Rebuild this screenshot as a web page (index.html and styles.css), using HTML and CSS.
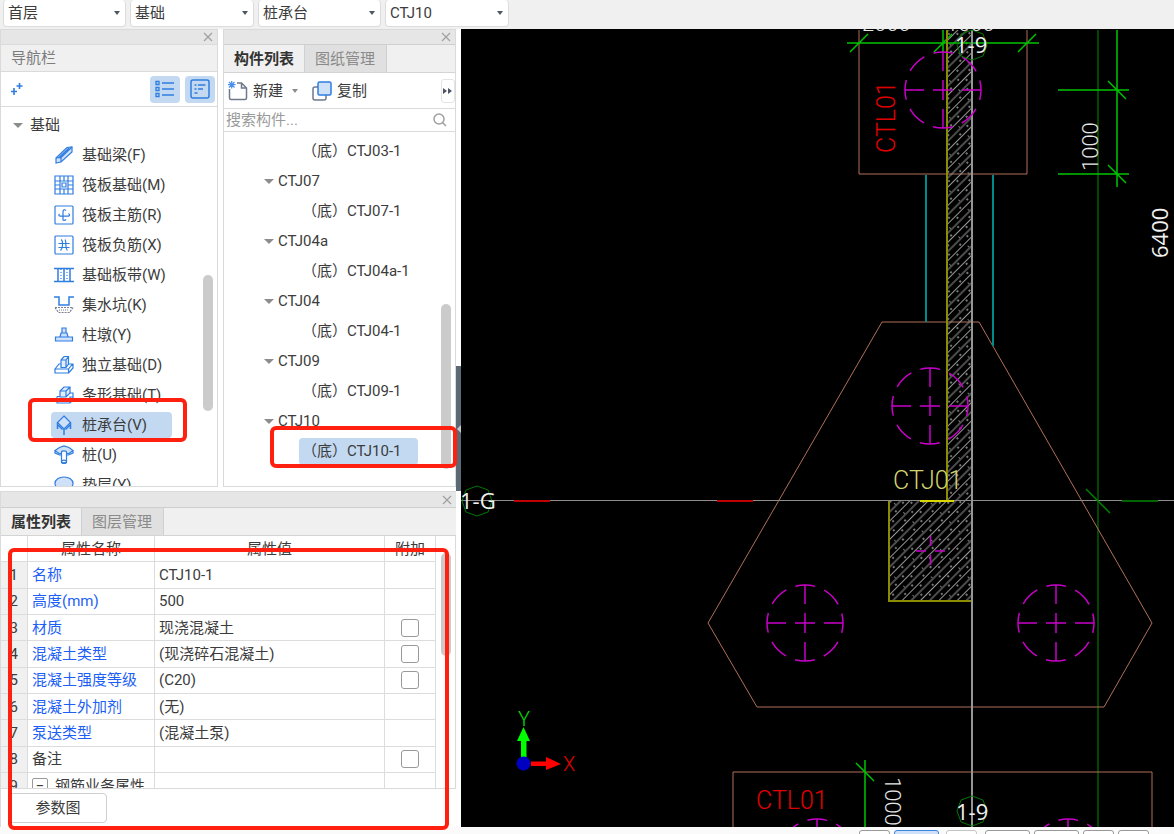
FILE: index.html
```html
<!DOCTYPE html>
<html lang="zh-CN">
<head>
<meta charset="utf-8">
<title>桩承台 CTJ10</title>
<link rel="stylesheet" href="styles.css">
</head>
<body>
<div class="app">
  <header class="topbar">
    <label class="picker"><select aria-label="楼层"><option>首层</option></select></label>
    <label class="picker"><select aria-label="构件大类"><option>基础</option></select></label>
    <label class="picker"><select aria-label="构件类型"><option>桩承台</option></select></label>
    <label class="picker"><select aria-label="构件名称"><option>CTJ10</option></select></label>
  </header>

  <main class="workspace">
    <div class="sidebar">
      <div class="upper">
        <section class="panel nav-panel">
          <div class="strip"><button class="close" aria-label="关闭导航栏"><svg width="10" height="10" viewBox="0 0 10 10"><path d="M1 1l8 8M9 1l-8 8"/></svg></button></div>
          <h2 class="panel-title">导航栏</h2>
          <div class="nav-tools">
            <button class="plain" aria-label="添加"><svg class="ico" width="14" height="16" viewBox="0 0 14 16"><path d="M4 7v7M1 10.500h6M9.500 2v6M6.500 5h6" stroke-width="1.600"/></svg></button>
            <span class="spacer"></span>
            <button class="toggle" aria-label="列表视图"><svg class="ico" width="22" height="20" viewBox="0 0 22 20"><path d="M8 4h12M8 10h12M8 16h12M2 2.500h3v3H2zM2 8.500h3v3H2zM2 14.500h3v3H2z" stroke-width="1.300"/></svg></button>
            <button class="toggle" aria-label="详情视图"><svg class="ico" width="20" height="20" viewBox="0 0 20 20"><rect x="1" y="1" width="18" height="18" rx="2" stroke-width="1.500"/><path d="M4.500 6h2M8 6h7.500M4.500 10h2M8 10h5M4.500 14h3" stroke-width="1.300"/></svg></button>
          </div>
          <div class="scroll-area">
            <button class="group-row"><i class="caret"></i>基础</button>
            <ul class="nav-list">
              <li><button><svg class="ico" viewBox="0 0 20 20"><path d="M2 13L13 2.500l5-.5v5L7 17l-5 1z" fill="#cfe1f8"/><path d="M2 13l5-.5V17M7 12.500L18 2M4.500 13L15 3"/></svg>基础梁(F)</button></li>
              <li><button><svg class="ico" viewBox="0 0 20 20"><path d="M1 1h18v18H1zM1 6h18M1 14h18M6 1v18M14 1v18M10 1v5M10 14v5M1 10h5M14 10h5"/><path d="M8 8h4v4H8z"/></svg>筏板基础(M)</button></li>
              <li><button><svg class="ico" viewBox="0 0 20 20"><rect x="1" y="1" width="18" height="18" rx="1"/><path d="M12 5.500c-1.500-1.500-3-.5-3 1.200v7.800c0 1.200 2 1.200 3 0M5.500 9c-1.200 1-.5 2.200.8 2.200h8c1.700 0 1.500-2 .2-2.700"/></svg>筏板主筋(R)</button></li>
              <li><button><svg class="ico" viewBox="0 0 20 20"><rect x="1" y="1" width="18" height="18" rx="1"/><path d="M4.500 8.500h11M4.500 12.500h11M7 4.500c2 1 1.500 3 1.500 5.500S8 14 6.500 15.500M11 4.500c1 1.500.8 3 .8 5s0 4 1.500 6"/></svg>筏板负筋(X)</button></li>
              <li><button><svg class="ico" viewBox="0 0 20 20"><path d="M0 3.500h20M0 16.500h20M4 3.500v13M10 3.500v13M16 3.500v13" stroke-width="1.500"/><path d="M7 4v12M13 4v12" stroke-dasharray="1 2"/></svg>基础板带(W)</button></li>
              <li><button><svg class="ico" viewBox="0 0 20 20"><path d="M0 2h5v8h10V2h5" stroke-width="1.500"/><path d="M1 12.500h18l-3.500 5h-11z" stroke="#77808f" stroke-dasharray="2 1"/><path d="M5 15h10" stroke="#77808f" stroke-dasharray="1 1"/></svg>集水坑(K)</button></li>
              <li><button><svg class="ico" viewBox="0 0 20 20"><path d="M1.500 12h17v4h-17zM6 12l1-4h6l1 4M8 8V3h4v5" fill="#cfe1f8"/></svg>柱墩(Y)</button></li>
              <li><button><svg class="ico" viewBox="0 0 20 20"><path d="M1 14l4-5h13.500l-4 5zM1 14v4h13.500v-4M14.500 18l4.500-5V9"/><path d="M7 12.500V5l3-3.500h4.500V9L12 12.500zM7 5h5v7.500M12 5l2.500-3.500" fill="#e1edfb"/></svg>独立基础(D)</button></li>
              <li><button><svg class="ico" viewBox="0 0 20 20"><path d="M3 11.500h4M3 11.500v6.500h13l3-3V8h-3M16 18v-6h3"/><path d="M6 12V6l4-4h6v6l-4 4zM6 6h6v6M12 6l4-4" fill="#e1edfb"/></svg>条形基础(T)</button></li>
              <li><button class="selected"><svg class="ico" viewBox="0 0 20 20"><path d="M10 1l6.500 6.500L10 14 3.500 7.500z" fill="#cfe1f8"/><path d="M3.500 7.500v6.500M16.500 7.500v6.500M10 14v6M4 10l4.500 4.500M16 10l-4.500 4.500" stroke-width="1.500"/></svg>桩承台(V)</button></li>
              <li><button><svg class="ico" viewBox="0 0 20 20"><path d="M1 5.500L5.500 2.500 10 1l5 1.500 4 3-4 3H5zM1 5.500v2.500L5.500 10h2M19 5.500V8l-4.500 2h-2" fill="#cfe1f8"/><path d="M7.500 7v10c0 2 5 2 5 0V7c0-1.500-5-1.500-5 0z" fill="#fff"/><ellipse cx="10" cy="16.500" rx="2.500" ry="1.300"/></svg>桩(U)</button></li>
              <li><button><svg class="ico" viewBox="0 0 20 20"><path d="M1 8.500C1 4.500 5 2 10 2s9 2.500 9 6.500c0 2-1.500 4-3 5.500H4C2.500 12.500 1 10.500 1 8.500z" fill="#cfe1f8"/></svg>垫层(Y)</button></li>
            </ul>
            <i class="thumb nav-thumb"></i>
          </div>
        </section>

        <section class="panel list-panel">
          <div class="strip"><button class="close" aria-label="关闭构件列表"><svg width="10" height="10" viewBox="0 0 10 10"><path d="M1 1l8 8M9 1l-8 8"/></svg></button></div>
          <div class="tabs" role="tablist">
            <button class="tab active" role="tab" aria-selected="true">构件列表</button>
            <button class="tab" role="tab" aria-selected="false">图纸管理</button>
          </div>
          <div class="list-tools">
            <button class="plain"><svg width="20" height="20" viewBox="0 0 20 20" fill="none"><path d="M1.500 8v9c0 1 .5 1.500 1.500 1.500h14c1 0 1.500-.5 1.500-1.500V7l-5-5H9M13.500 2v5h5" stroke="#70798a" stroke-width="1.500"/><path d="M1 1l5.500 5.500M6.500 1L1 6.500M3.700 0v7.500M0 3.700h7.500" stroke="#4a90ea" stroke-width="1.200"/></svg>新建<i class="caret small"></i></button>
            <button class="plain copy"><svg width="20" height="20" viewBox="0 0 20 20"><rect x="1" y="6" width="13" height="13" rx="2" fill="#fff" stroke="#70798a" stroke-width="1.500"/><rect x="6" y="1" width="13" height="13" rx="1.500" fill="#cfe1f8" stroke="#2f7de1" stroke-width="1.500"/></svg>复制</button>
            <span class="spacer"></span>
            <button class="more" aria-label="更多"><svg width="10" height="6" viewBox="0 0 10 6"><path d="M0 0l4 3-4 3zM5 0l4 3-4 3z" fill="#4d5563"/></svg></button>
          </div>
          <div class="search">
            <input type="text" placeholder="搜索构件..." aria-label="搜索构件">
            <svg width="14" height="14" viewBox="0 0 14 14" fill="none" stroke="#a0a0a0" stroke-width="1.500"><circle cx="6" cy="6" r="5"/><path d="M9.500 9.500L13 13"/></svg>
          </div>
          <div class="scroll-area">
            <ul class="part-list">
              <li><button class="leaf">（底）CTJ03-1</button></li>
              <li><button class="branch"><i class="caret"></i>CTJ07</button></li>
              <li><button class="leaf">（底）CTJ07-1</button></li>
              <li><button class="branch"><i class="caret"></i>CTJ04a</button></li>
              <li><button class="leaf">（底）CTJ04a-1</button></li>
              <li><button class="branch"><i class="caret"></i>CTJ04</button></li>
              <li><button class="leaf">（底）CTJ04-1</button></li>
              <li><button class="branch"><i class="caret"></i>CTJ09</button></li>
              <li><button class="leaf">（底）CTJ09-1</button></li>
              <li><button class="branch"><i class="caret"></i>CTJ10</button></li>
              <li><button class="leaf selected">（底）CTJ10-1</button></li>
            </ul>
            <i class="thumb part-thumb"></i>
          </div>
        </section>
      </div>

      <section class="panel props-panel">
        <div class="strip"><button class="close" aria-label="关闭属性列表"><svg width="10" height="10" viewBox="0 0 10 10"><path d="M1 1l8 8M9 1l-8 8"/></svg></button></div>
        <div class="tabs" role="tablist">
          <button class="tab active" role="tab" aria-selected="true">属性列表</button>
          <button class="tab" role="tab" aria-selected="false">图层管理</button>
        </div>
        <div class="props-body">
          <table class="props">
            <colgroup><col class="c-num"><col class="c-name"><col class="c-value"><col class="c-extra"></colgroup>
            <thead><tr><td></td><th scope="col">属性名称</th><th scope="col">属性值</th><th scope="col">附加</th></tr></thead>
            <tbody>
              <tr><td>1</td><th scope="row">名称</th><td>CTJ10-1</td><td></td></tr>
              <tr><td>2</td><th scope="row">高度(mm)</th><td>500</td><td></td></tr>
              <tr><td>3</td><th scope="row">材质</th><td>现浇混凝土</td><td><input type="checkbox" aria-label="附加 材质"></td></tr>
              <tr><td>4</td><th scope="row">混凝土类型</th><td>(现浇碎石混凝土)</td><td><input type="checkbox" aria-label="附加 混凝土类型"></td></tr>
              <tr><td>5</td><th scope="row">混凝土强度等级</th><td>(C20)</td><td><input type="checkbox" aria-label="附加 混凝土强度等级"></td></tr>
              <tr><td>6</td><th scope="row">混凝土外加剂</th><td>(无)</td><td></td></tr>
              <tr><td>7</td><th scope="row">泵送类型</th><td>(混凝土泵)</td><td></td></tr>
              <tr><td>8</td><th scope="row" class="dark">备注</th><td></td><td><input type="checkbox" aria-label="附加 备注"></td></tr>
              <tr><td>9</td><th scope="row" class="dark"><button class="fold" aria-label="折叠">−</button>钢筋业务属性</th><td></td><td></td></tr>
            </tbody>
          </table>
          <i class="thumb props-thumb"></i>
        </div>
        <div class="props-foot"><button class="diagram-btn">参数图</button></div>
      </section>
    </div>

    <div class="splitter"><button class="grip" aria-label="收起侧栏"></button></div>

    <svg class="cad" viewBox="461 29 713 798" preserveAspectRatio="xMidYMid slice" fill="none">
      <defs>
        <pattern id="hatch" width="13" height="26" patternUnits="userSpaceOnUse" patternTransform="rotate(45)">
          <path d="M3 0v26M9.500 0v26" stroke="#989898"/>
          <path d="M6 2v2M1 9v1M7 13v2M12 22v2" stroke="#a0a0a0" stroke-width="1.500"/>
        </pattern>
        <g id="pile">
          <circle r="38" stroke-dasharray="20 9.845" stroke-dashoffset="10"/>
          <path d="M-38 0h19M-10 0h20M19 0h19M0-38v19M0-10v20M0 19v19"/>
        </g>
        <path id="bubble" d="M0-15L11-11 15 0 11 11 0 15-11 11-15 0-11-11z"/>
      </defs>
      <path class="dark-green" d="M1098 30v797"/>
      <path class="brown" d="M859 30v144h168V30M882 322h97l173 301-48 84H757l-49-84zM733 827v-55h419v55"/>
      <path class="cyan" d="M926 175v147M993 175v171"/>
      <path d="M947 30h25v571h-83V501h58z" fill="url(#hatch)"/>
      <path class="axis" d="M461 500.500h713"/>
      <path class="green" d="M943 30v22M1117 30v157M865 760v67"/>
      <path class="bright" d="M847 43h192M850 52l18-18M934 52l18-18M1018 52l18-18M1058 90h71M1058 174h71M1108 81l18 18M1108 165l18 18M856 763l18 18"/>
      <path class="yellow" d="M947 30v470M889 501v100h83"/>
      <path d="M920 501h34" stroke="#d8d800" stroke-width="2"/>
      <path class="axis-v" d="M972 30v797"/>
      <path d="M514 501h36M717 501h36" stroke="#c00000" stroke-width="2"/>
      <path d="M1122 501h36" stroke="#006400" stroke-width="2"/>
      <path d="M1086 489l24 24" stroke="#008000" stroke-width="1.500"/>
      <g class="magenta">
        <use href="#pile" x="943" y="90"/>
        <use href="#pile" x="930" y="406"/>
        <use href="#pile" x="805" y="623"/>
        <use href="#pile" x="1056" y="623"/>
        <use href="#pile" x="817" y="857"/>
        <use href="#pile" x="1068" y="857"/>
        <path d="M916 551h10M935 551h10M930.500 536v10M930.500 555v10"/>
      </g>
      <g class="bubbles">
        <use href="#bubble" x="972" y="45"/>
        <use href="#bubble" x="477" y="501"/>
        <use href="#bubble" x="972" y="811"/>
      </g>
      <g class="marks">
        <text transform="translate(895 153) rotate(-90)" class="red">CTL01</text>
        <text x="893" y="489" class="pale">CTJ01</text>
        <text x="756" y="809" class="red">CTL01</text>
      </g>
      <g class="sizes">
        <text x="862" y="31">2000</text>
        <text x="946" y="31">1000</text>
        <text transform="translate(1098 171) rotate(-90)">1000</text>
        <text transform="translate(885 777) rotate(90)">1000</text>
      </g>
      <g class="plain-text">
        <text x="955" y="53">1-9</text>
        <text x="460" y="509">1-G</text>
        <text x="956" y="820">1-9</text>
        <text transform="translate(1168 258) rotate(-90)">6400</text>
      </g>
      <path d="M521 757v-16h-4l6.500-14 6.500 14h-3.500v16z" fill="#00ff00"/>
      <path d="M531 761.500h15V757l15 7-15 6v-4h-15z" fill="#ff0000"/>
      <circle cx="523.500" cy="763.500" r="7" fill="#0000c0"/>
      <text class="axis-name" x="518" y="726" fill="#00e000">Y</text>
      <text class="axis-name" x="563" y="771" fill="#e00000">X</text>
    </svg>
  </main>

  <footer class="bottombar">
    <button aria-label="工具一" class="chip"></button>
    <button aria-label="工具二" class="chip wide on"></button>
    <button aria-label="工具三" class="chip faint"></button>
    <button aria-label="工具四" class="chip wide"></button>
    <button aria-label="工具五" class="chip wide"></button>
    <button aria-label="工具六" class="chip"></button>
    <button aria-label="工具七" class="chip"></button>
  </footer>

  <i class="mark mark-nav"></i>
  <i class="mark mark-part"></i>
  <i class="mark mark-props"></i>
</div>
</body>
</html>
```
FILE: styles.css
```css
* { box-sizing: border-box; }

body {
  margin: 0;
  font: 15px/20px Roboto, "Noto Sans CJK SC", sans-serif;
  color: #3c3c3c;
  background: #fff;
}

button, input, select { font: inherit; color: inherit; }
button { border: 0; padding: 0; background: none; text-align: left; }
ul { list-style: none; margin: 0; padding: 0; }

.app {
  position: relative;
  display: flex;
  flex-direction: column;
  height: 100vh;
  overflow: hidden;
}

/* Top bar */
.topbar {
  display: flex;
  gap: 4px;
  height: 29px;
  padding: 0 3px 2px;
  background: #f0f0f0;
}
.picker { position: relative; width: 124px; }
.picker:nth-child(2n+1) { width: 123px; }
.picker select {
  width: 100%;
  height: 27px;
  padding: 0 4px;
  border: 1px solid #dcdcdc;
  border-top: 0;
  border-radius: 4px;
  background: #fff;
  appearance: none;
}
.picker::after {
  content: "";
  position: absolute;
  right: 6px;
  top: 11px;
  border: 3px solid transparent;
  border-top: 4px solid #4d5563;
  border-bottom: 0;
}

/* Frame */
.workspace { flex: 1; display: flex; min-height: 0; }
.sidebar { width: 456px; display: flex; flex-direction: column; gap: 4px; }
.upper { flex: 459 1 0; min-height: 0; display: flex; gap: 5px; }
.panel {
  display: flex;
  flex-direction: column;
  min-height: 0;
  border: 1px solid #dadada;
  background: #fff;
}
.nav-panel { width: 218px; }
.list-panel { flex: 1; }
.props-panel { flex: 335 1 0; border-bottom: 0; border-right: 0; }

.strip {
  display: flex;
  justify-content: flex-end;
  align-items: center;
  flex: none;
  height: 14px;
  padding-right: 4px;
  background: #e6e6e6;
}
.close { display: flex; }
.close svg { stroke: #a0a0a0; stroke-width: 1.2; }
.panel-title {
  flex: none;
  margin: 0;
  height: 27px;
  padding-left: 10px;
  border-top: 1px solid #dadada;
  font-size: 15px;
  font-weight: 400;
  line-height: 27px;
  color: #7c7c7c;
  background: #f0f0f0;
}
.spacer { flex: 1; }
.plain { display: flex; align-items: center; gap: 5px; }
.ico { fill: none; stroke: #2f7de1; stroke-width: 1.2; flex: none; }
.nav-tools {
  display: flex;
  align-items: center;
  flex: none;
  gap: 5px;
  height: 36px;
  padding: 0 2px 0 9px;
  border-top: 1px solid #dadada;
  border-bottom: 1px solid #dadada;
}
.toggle {
  display: grid;
  place-items: center;
  width: 30px;
  height: 27px;
  border-radius: 4px;
  background: #c2d9f1;
}
.scroll-area { position: relative; flex: 1; min-height: 0; overflow: hidden; }
.thumb {
  position: absolute;
  right: 4px;
  width: 10px;
  border-radius: 5px;
  background: #cbcbcb;
}
.nav-thumb { top: 168px; height: 136px; }
.part-thumb { top: 172px; height: 165px; }
.props-thumb { top: 17px; height: 103px; }

.caret {
  border: 5px solid transparent;
  border-top: 5px solid #8c8c8c;
  border-bottom: 0;
}
.caret.small { border-width: 4px 3px 0; margin-left: 4px; }

/* Component tree */
.group-row {
  display: flex;
  align-items: center;
  gap: 7px;
  height: 30px;
  margin: 3px 0 0 12px;
}
.nav-list li { display: flex; height: 30px; padding: 2px 0 2px 50px; }
.nav-list button {
  display: flex;
  align-items: center;
  gap: 8px;
  height: 26px;
  padding: 0 25px 0 3px;
  border-radius: 4px;
  white-space: nowrap;
}
.nav-list svg { width: 20px; height: 20px; }
.selected { background: #c2d9f1; }

/* Tabs */
.tabs {
  display: flex;
  flex: none;
  height: 29px;
  border-top: 1px solid #cfcfcf;
  border-bottom: 1px solid #d4d4d4;
  background: #f0f0f0;
}
.tab {
  width: 82px;
  padding: 0 10px;
  border-right: 1px solid #cdd0d4;
  color: #8a8a8a;
  background: #e0e0e0;
}
.tab.active { width: 81px; font-weight: 700; color: #333; background: #f0f0f0; }
.props-panel .strip { height: 15px; }

.list-tools {
  display: flex;
  align-items: center;
  flex: none;
  height: 35px;
  padding-left: 4px;
}
.copy { margin-left: 14px; }
.more {
  display: grid;
  place-items: center;
  width: 14px;
  height: 24px;
  border: 1px solid #e4e4e4;
  border-radius: 3px;
}
.search {
  display: flex;
  align-items: center;
  flex: none;
  height: 24px;
  padding: 0 8px 0 2px;
  border-top: 1px solid #dadada;
  border-bottom: 1px solid #dadada;
}
.search input { flex: 1; min-width: 0; padding: 0; border: 0; outline: 0; }
.search input::placeholder { color: #9a9a9a; }

.part-list { padding-top: 4px; }
.part-list li { display: flex; align-items: center; height: 30px; }
.leaf { height: 27px; margin-left: 75px; padding: 0 17px 0 3px; border-radius: 4px; white-space: nowrap; }
.branch { display: flex; align-items: center; gap: 4px; margin-left: 40px; }

/* Property table */
.props-body {
  position: relative;
  flex: 1;
  min-height: 0;
  overflow: hidden;
  border-right: 1px solid #dadada;
  border-bottom: 1px solid #dadada;
}
.props {
  table-layout: fixed;
  width: calc(100% - 19px);
  height: 263px;
  border-collapse: separate;
  border-spacing: 0;
}
.c-num { width: 27px; }
.c-name { width: 127px; }
.c-extra { width: 51px; }
.props tr { height: 26px; }
.props td, .props th {
  padding: 0 0 0 4px;
  border-right: 1px solid #dcdcdc;
  border-bottom: 1px solid #dcdcdc;
  font-weight: 400;
  text-align: left;
  white-space: nowrap;
}
.props thead th { padding: 0; text-align: center; }
.props tbody th { color: #1d5ff5; }
.props tbody th.dark { color: inherit; }
.props tbody td:first-child { padding: 0 9px 0 0; text-align: right; background: #f0f0f0; }
.props td:last-child { padding: 0; text-align: center; }
.props input {
  appearance: none;
  display: block;
  width: 18px;
  height: 18px;
  margin: 0 auto;
  border: 1px solid #999;
  border-radius: 3px;
  background: #fff;
}
.fold {
  width: 16px;
  height: 16px;
  margin-right: 7px;
  border: 1px solid #999;
  border-radius: 2px;
  line-height: 14px;
  text-align: center;
}
.props-foot { flex: none; height: 38px; padding: 4px 8px; }
.diagram-btn {
  width: 98px;
  height: 30px;
  border: 1px solid #cfcfcf;
  border-radius: 4px;
  text-align: center;
  background: #fff;
}

/* Splitter between the panels and the drawing */
.splitter { display: flex; flex-direction: column; width: 5px; padding-top: 337px; background: #fff; }
.grip { display: grid; place-items: center; height: 125px; background: #5d6876; }
.grip::after { content: ""; border: 4px solid transparent; border-right-color: #c4c9d0; border-left: 0; }

/* Drawing */
.cad { flex: 1; min-width: 0; height: 100%; background: #000; }
.brown { stroke: #b07058; }
.cyan { stroke: #008b8b; stroke-width: 2; }
.dark-green { stroke: #004600; stroke-width: 2; }
.green { stroke: #009600; stroke-width: 2; }
.bright { stroke: #00c400; stroke-width: 1.5; }
.yellow { stroke: #8c8c00; stroke-width: 2; }
.axis { stroke: #8c8c8c; }
.axis-v { stroke: #969696; stroke-width: 2; }
.magenta { stroke: #c800c8; stroke-width: 1.5; }
.bubbles { stroke: #007800; }
.marks { font: 300 25px Roboto, sans-serif; }
.sizes { font: 300 22px Roboto, sans-serif; fill: #e6e6e6; }
.plain-text { font: 22px "Open Sans", sans-serif; fill: #f0f0f0; }
.red { fill: #e00000; }
.pale { fill: #d2d26e; }
.axis-name { font: 300 20px Roboto, sans-serif; }

/* Cut-off tool row */
.bottombar {
  display: flex;
  justify-content: flex-end;
  gap: 4px;
  flex: none;
  height: 7px;
  padding: 3px 25px 0 0;
  overflow: hidden;
  background: #fafafa;
}
.chip { width: 31px; height: 20px; border: 1px solid #999; border-radius: 3px; background: #fff; }
.chip.wide { width: 45px; }
.chip.on { border-color: #3c82e0; background: #cfe1f8; }
.chip.faint { margin: 0 4px 0 3px; border-color: #c4c4c4; }

/* Highlight frames */
.mark { position: absolute; border: 4px solid #ff2010; border-radius: 6px; pointer-events: none; }
.mark-nav { left: 28px; top: 398px; width: 159px; height: 44px; }
.mark-part { left: 270px; top: 426px; width: 187px; height: 42px; }
.mark-props { left: 8px; top: 548px; width: 441px; height: 282px; }
```
